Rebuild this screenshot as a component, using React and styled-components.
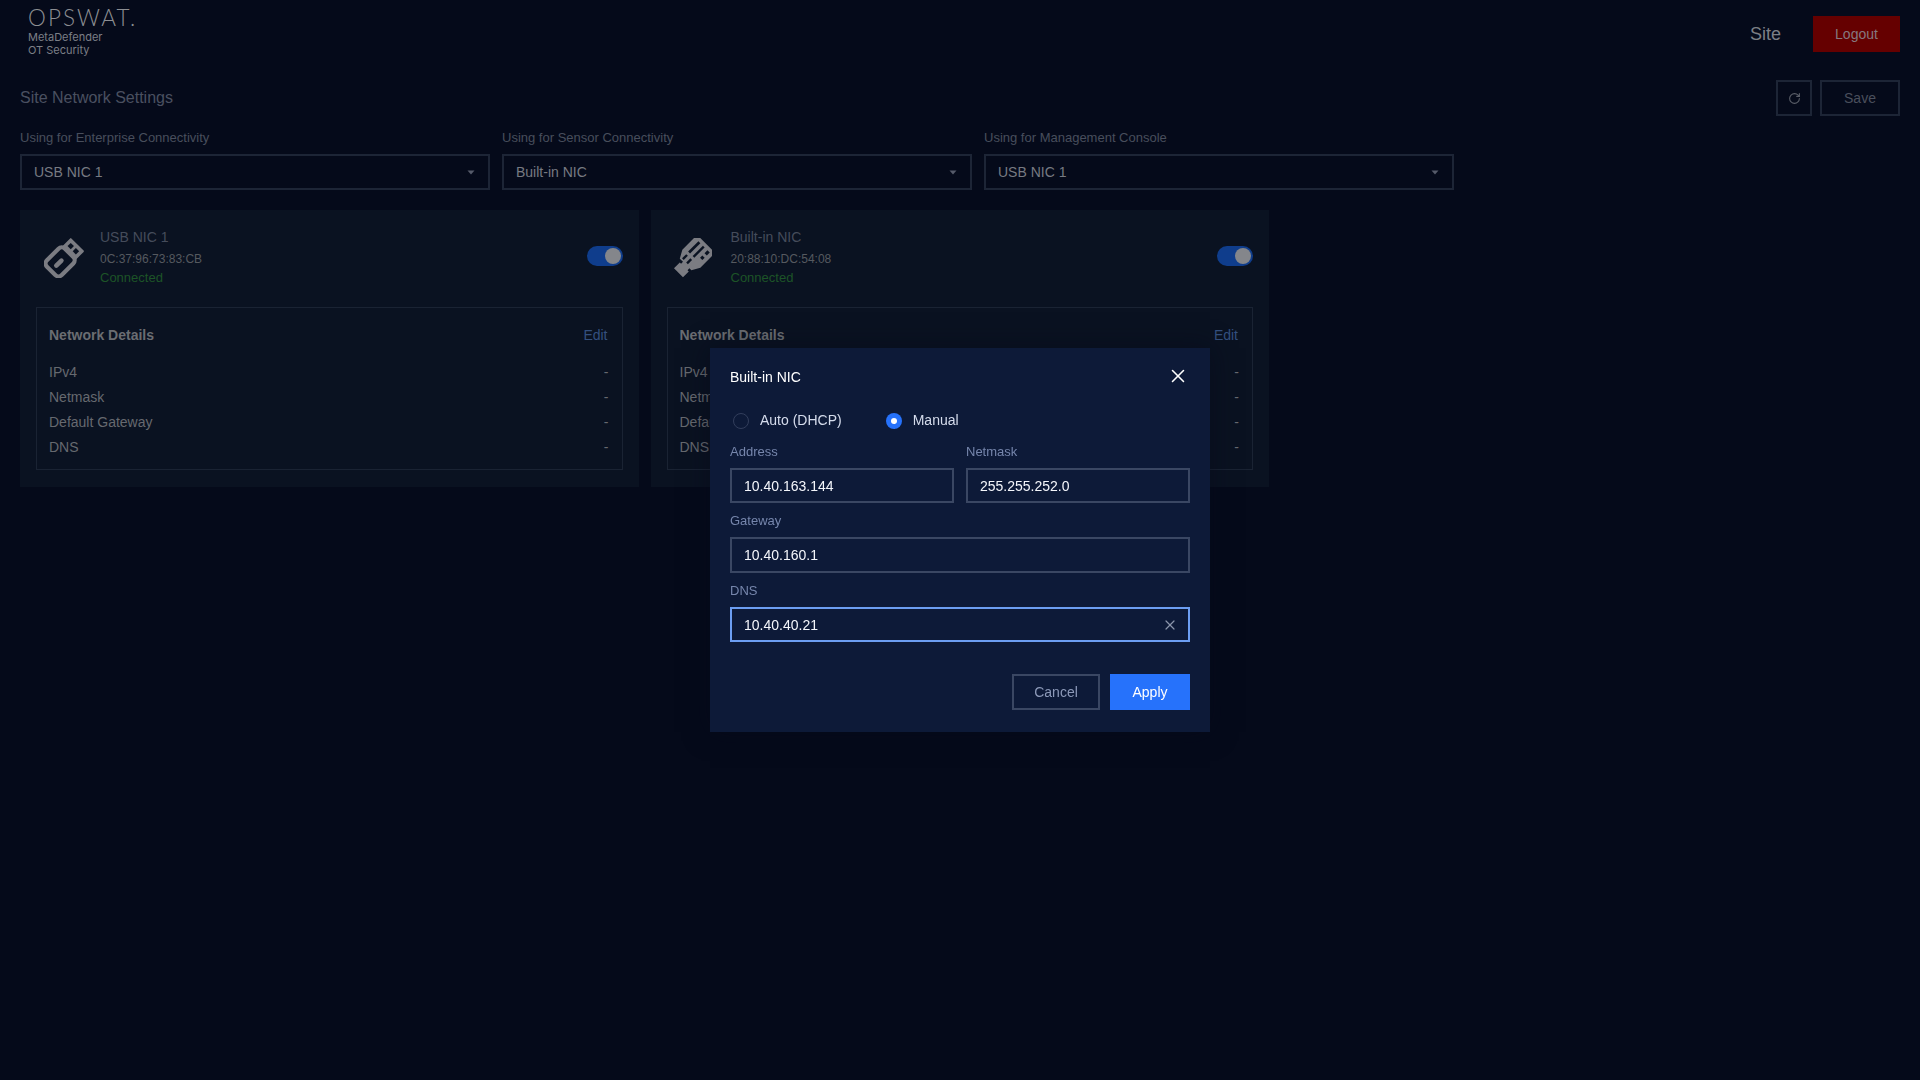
import React from "react";
import styled, { createGlobalStyle } from "styled-components";
import { RotateCw, X } from "lucide-react";

const Global = createGlobalStyle`
  html, body { margin: 0; padding: 0; background: #050a1a; }
  body { font-family: "Liberation Sans", Arial, sans-serif; }
  * { box-sizing: border-box; }
`;

const Page = styled.div`
  min-height: 100vh;
  background: #050a1a;
  padding: 0 20px;
`;

const Header = styled.header`
  height: 68px;
  display: flex;
  justify-content: space-between;
  align-items: flex-start;
`;

const Brand = styled.div`
  padding: 6px 0 0 8px;
  color: #83858a;
`;

const LogoWord = styled.div`
  font-family: Lato, "Liberation Sans", sans-serif;
  font-weight: 300;
  font-size: 22.5px;
  line-height: 24px;
  letter-spacing: 2.1px;
  margin-bottom: 1px;
  color: #8c8e92;
`;

const Product = styled.div`
  font-family: Inter, Roboto, "Liberation Sans", sans-serif;
  font-size: 11px;
  line-height: 13px;
  color: #7c7f86;
`;

const HeaderRight = styled.div`
  display: flex;
  align-items: center;
  gap: 32px;
  margin-top: 16px;
`;

const SiteLink = styled.span`
  font-size: 18px;
  color: #7c7f86;
`;

const LogoutButton = styled.div`
  width: 87px;
  height: 36px;
  display: flex;
  align-items: center;
  justify-content: center;
  background: #650000;
  color: #85787f;
  font-size: 14px;
`;

const TitleRow = styled.div`
  margin-top: 12px;
  height: 36px;
  display: flex;
  align-items: center;
  justify-content: space-between;
`;

const PageTitle = styled.h1`
  margin: 0;
  font-size: 16px;
  font-weight: 400;
  color: #4a5060;
`;

const TitleActions = styled.div`
  display: flex;
  gap: 8px;
`;

const GhostButton = styled.div`
  width: ${(p) => p.$w}px;
  height: 36px;
  display: flex;
  align-items: center;
  justify-content: center;
  border: 2px solid #1d2536;
  color: #4a4f5c;
  font-size: 14px;
`;

const FieldRow = styled.div`
  display: flex;
  gap: 12px;
  margin-top: 14px;
`;

const Field = styled.div`
  width: 470px;
`;

const FieldLabel = styled.div`
  font-size: 13px;
  line-height: 16px;
  margin-bottom: 8px;
  color: #484e5c;
`;

const SelectBox = styled.div`
  height: 36px;
  display: flex;
  align-items: center;
  justify-content: space-between;
  padding: 0 13px 0 12px;
  border: 2px solid #1d2536;
  color: #777a82;
  font-size: 14px;
`;

const CardRow = styled.div`
  display: flex;
  gap: 12px;
  margin-top: 20px;
`;

const Card = styled.section`
  width: 618.5px;
  height: 277px;
  padding: 16px;
  background: #0a1221;
`;

const CardHead = styled.div`
  display: flex;
  align-items: center;
  height: 61px;
`;

const IconSlot = styled.div`
  width: 64px;
  height: 40px;
  margin-top: 2px;
  padding-left: ${(p) => p.$pad}px;
  flex: none;
`;

const NicInfo = styled.div`
  flex: 1;
`;

const NicName = styled.div`
  font-size: 14px;
  line-height: 20px;
  margin-bottom: 2px;
  color: #454c5b;
`;

const NicMac = styled.div`
  font-size: 12px;
  line-height: 20px;
  color: #55595f;
`;

const NicStatus = styled.div`
  font-size: 13px;
  line-height: 18px;
  color: #1d5427;
`;

const Toggle = styled.div`
  width: 36px;
  height: 20px;
  margin-top: -1px;
  border-radius: 10px;
  background: #0f3d8c;
  display: flex;
  align-items: center;
  justify-content: flex-end;
  padding-right: 2px;
`;

const Knob = styled.div`
  width: 16px;
  height: 16px;
  border-radius: 50%;
  background: #84868b;
`;

const Details = styled.div`
  margin-top: 20px;
  height: 163px;
  border: 1px solid #1a2333;
  padding: 16px 14px 10px 12px;
`;

const DetailsHead = styled.div`
  display: flex;
  justify-content: space-between;
  line-height: 22px;
  font-size: 14px;
  margin-bottom: 14px;
`;

const DetailsTitle = styled.span`
  font-weight: 700;
  color: #6a6d72;
`;

const EditLink = styled.span`
  color: #34507f;
`;

const DetailRow = styled.div`
  display: flex;
  justify-content: space-between;
  line-height: 25px;
  font-size: 14px;
  margin-right: -1px;
  color: #66696f;
`;

const Backdrop = styled.div`
  position: fixed;
  inset: 0;
  display: flex;
  align-items: center;
  justify-content: center;
`;

const Modal = styled.div`
  width: 500px;
  height: 384px;
  padding: 18px 20px 22px;
  background: #0d1a38;
  box-shadow: 0 0 24px rgba(5, 10, 26, 0.55);
  display: flex;
  flex-direction: column;
`;

const ModalHead = styled.div`
  height: 22px;
  display: flex;
  align-items: center;
  justify-content: space-between;
  color: #fff;
  font-size: 14px;
`;

const CloseIcon = styled(X)`
  margin-top: -2px;
  margin-right: 1px;
`;

const RadioRow = styled.div`
  height: 24px;
  margin-top: 20px;
  padding-left: 3px;
  display: flex;
  align-items: center;
`;

const RadioOption = styled.label`
  display: flex;
  align-items: center;
  gap: 11px;
  margin-right: 44px;
  color: #d5dcec;
  font-size: 14px;
`;

const RadioMark = styled.span`
  width: 16px;
  height: 16px;
  margin-top: 1px;
  border-radius: 50%;
  display: flex;
  align-items: center;
  justify-content: center;
  background: ${(p) => (p.$on ? "#2672fb" : "transparent")};
  border: ${(p) => (p.$on ? "none" : "1.5px solid #323e5c")};
  &::after {
    content: "";
    display: ${(p) => (p.$on ? "block" : "none")};
    width: 6px;
    height: 6px;
    border-radius: 50%;
    background: #fff;
  }
`;

const FormGrid = styled.div`
  margin-top: 12px;
  display: grid;
  grid-template-columns: 1fr 1fr;
  column-gap: 12px;
  row-gap: 10px;
`;

const FormField = styled.div`
  grid-column: ${(p) => (p.$wide ? "1 / -1" : "auto")};
`;

const FormLabel = styled.div`
  font-size: 13px;
  line-height: 16px;
  margin-bottom: 8px;
  color: #7686ac;
`;

const InputBox = styled.div`
  height: ${(p) => p.$h}px;
  display: flex;
  align-items: center;
  justify-content: space-between;
  padding: 0 10px 0 12px;
  border: 2px solid ${(p) => (p.$focus ? "#6c9ef2" : "#3a4763")};
  color: #f4f6fb;
  font-size: 14px;
`;

const ClearIcon = styled(X)`
  color: #8b95ab;
`;

const ModalFoot = styled.div`
  margin-top: auto;
  display: flex;
  justify-content: flex-end;
  gap: 10px;
`;

const CancelButton = styled.div`
  width: 88px;
  height: 36px;
  display: flex;
  align-items: center;
  justify-content: center;
  border: 2px solid #3a4763;
  color: #8c99b8;
  font-size: 14px;
`;

const ApplyButton = styled.div`
  width: 80px;
  height: 36px;
  display: flex;
  align-items: center;
  justify-content: center;
  background: #2672fb;
  color: #fff;
  font-size: 14px;
`;

const Caret = () => (
  <svg width="8" height="5" viewBox="0 0 8 5"><path d="M0.5 0.5h7L4 4.5z" fill="#565b6a" /></svg>
);

const UsbIcon = () => (
  <svg width="40" height="40" viewBox="0 0 44 44">
    <g transform="rotate(45 22 22)">
      <rect x="11.5" y="1" width="21" height="16" rx="1" fill="#7b7c82" />
      <rect x="15.5" y="5" width="5" height="5" fill="#0a1221" />
      <rect x="23.5" y="5" width="5" height="5" fill="#0a1221" />
      <rect x="10.5" y="14" width="23" height="28" rx="5" fill="#0a1221" stroke="#7b7c82" strokeWidth="4.6" />
      <path d="M22 26v8" stroke="#7b7c82" strokeWidth="5" strokeLinecap="round" />
    </g>
  </svg>
);

const PlugIcon = () => (
  <svg width="40" height="40" viewBox="0 0 44 44">
    <g transform="rotate(45 22 22)">
      <path d="M8 0h28v23l-5 9h-3v3h2v9H16v-9h2v-3h-5l-5-9z" fill="#7b7c82" />
      <g fill="#0a1221">
        <rect x="14" y="4" width="3" height="16" />
        <rect x="21" y="4" width="2.6" height="16" />
        <rect x="28" y="4" width="3.6" height="4.5" />
        <rect x="28" y="12" width="3.6" height="3.5" />
        <rect x="14.5" y="23.5" width="2.6" height="6.5" />
        <rect x="21" y="23.5" width="2.6" height="6.5" />
      </g>
    </g>
  </svg>
);

const rows = ["IPv4", "Netmask", "Default Gateway", "DNS"];

const NicCard = ({ name, mac, icon, iconPad }) => (
  <Card>
    <CardHead>
      <IconSlot $pad={iconPad}>{icon}</IconSlot>
      <NicInfo>
        <NicName>{name}</NicName>
        <NicMac>{mac}</NicMac>
        <NicStatus>Connected</NicStatus>
      </NicInfo>
      <Toggle><Knob /></Toggle>
    </CardHead>
    <Details>
      <DetailsHead>
        <DetailsTitle>Network Details</DetailsTitle>
        <EditLink>Edit</EditLink>
      </DetailsHead>
      {rows.map((r) => (
        <DetailRow key={r}><span>{r}</span><span>-</span></DetailRow>
      ))}
    </Details>
  </Card>
);

const selects = [
  ["Using for Enterprise Connectivity", "USB NIC 1"],
  ["Using for Sensor Connectivity", "Built-in NIC"],
  ["Using for Management Console", "USB NIC 1"],
];

export default function App() {
  return (
    <>
      <Global />
      <Page>
        <Header>
          <Brand>
            <LogoWord>OPSWAT.</LogoWord>
            <Product>MetaDefender</Product>
            <Product>OT Security</Product>
          </Brand>
          <HeaderRight>
            <SiteLink>Site</SiteLink>
            <LogoutButton>Logout</LogoutButton>
          </HeaderRight>
        </Header>
        <TitleRow>
          <PageTitle>Site Network Settings</PageTitle>
          <TitleActions>
            <GhostButton $w={36}><RotateCw size={13} color="#5a5e68" strokeWidth={2} /></GhostButton>
            <GhostButton $w={80}>Save</GhostButton>
          </TitleActions>
        </TitleRow>
        <FieldRow>
          {selects.map(([label, value]) => (
            <Field key={label}>
              <FieldLabel>{label}</FieldLabel>
              <SelectBox>{value}<Caret /></SelectBox>
            </Field>
          ))}
        </FieldRow>
        <CardRow>
          <NicCard name="USB NIC 1" mac="0C:37:96:73:83:CB" icon={<UsbIcon />} iconPad={8} />
          <NicCard name="Built-in NIC" mac="20:88:10:DC:54:08" icon={<PlugIcon />} iconPad={5} />
        </CardRow>
      </Page>
      <Backdrop>
        <Modal>
          <ModalHead>
            Built-in NIC
            <CloseIcon size={22} strokeWidth={1.7} color="#ffffff" />
          </ModalHead>
          <RadioRow>
            <RadioOption><RadioMark />Auto (DHCP)</RadioOption>
            <RadioOption><RadioMark $on />Manual</RadioOption>
          </RadioRow>
          <FormGrid>
            <FormField>
              <FormLabel>Address</FormLabel>
              <InputBox $h={35}>10.40.163.144</InputBox>
            </FormField>
            <FormField>
              <FormLabel>Netmask</FormLabel>
              <InputBox $h={35}>255.255.252.0</InputBox>
            </FormField>
            <FormField $wide>
              <FormLabel>Gateway</FormLabel>
              <InputBox $h={36}>10.40.160.1</InputBox>
            </FormField>
            <FormField $wide>
              <FormLabel>DNS</FormLabel>
              <InputBox $h={35} $focus>10.40.40.21<ClearIcon size={16} strokeWidth={1.8} /></InputBox>
            </FormField>
          </FormGrid>
          <ModalFoot>
            <CancelButton>Cancel</CancelButton>
            <ApplyButton>Apply</ApplyButton>
          </ModalFoot>
        </Modal>
      </Backdrop>
    </>
  );
}
